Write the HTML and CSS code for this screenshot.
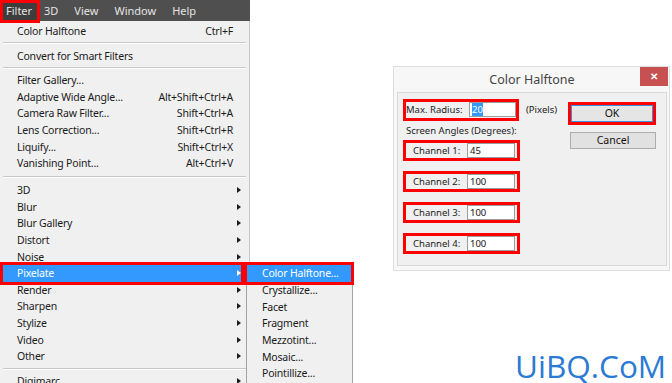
FILE: index.html
```html
<!DOCTYPE html>
<html>
<head>
    <meta charset="UTF-8">
    <title>Color Halftone</title>
    <link rel="stylesheet" href="styles.css">
</head>
<body>
    <div class="screen">
        <div class="ps">
            <div class="menubar">
                <span class="mb-item mb-active">Filter</span>
                <span class="mb-item mb-first">3D</span>
                <span class="mb-item">View</span>
                <span class="mb-item">Window</span>
                <span class="mb-item">Help</span>
            </div>
            <div class="menu">
                <div class="row"><span>Color Halftone</span><span class="key">Ctrl+F</span></div>
                <div class="sep"></div>
                <div class="row"><span>Convert for Smart Filters</span></div>
                <div class="sep"></div>
                <div class="row"><span>Filter Gallery...</span></div>
                <div class="row"><span>Adaptive Wide Angle...</span><span class="key">Alt+Shift+Ctrl+A</span></div>
                <div class="row"><span>Camera Raw Filter...</span><span class="key">Shift+Ctrl+A</span></div>
                <div class="row"><span>Lens Correction...</span><span class="key">Shift+Ctrl+R</span></div>
                <div class="row"><span>Liquify...</span><span class="key">Shift+Ctrl+X</span></div>
                <div class="row"><span>Vanishing Point...</span><span class="key">Alt+Ctrl+V</span></div>
                <div class="sep sep-wide"></div>
                <div class="row sub"><span>3D</span><i class="arrow"></i></div>
                <div class="row sub"><span>Blur</span><i class="arrow"></i></div>
                <div class="row sub"><span>Blur Gallery</span><i class="arrow"></i></div>
                <div class="row sub"><span>Distort</span><i class="arrow"></i></div>
                <div class="row sub"><span>Noise</span><i class="arrow"></i></div>
                <div class="row sub sel"><span>Pixelate</span><i class="arrow"></i></div>
                <div class="row sub"><span>Render</span><i class="arrow"></i></div>
                <div class="row sub"><span>Sharpen</span><i class="arrow"></i></div>
                <div class="row sub"><span>Stylize</span><i class="arrow"></i></div>
                <div class="row sub"><span>Video</span><i class="arrow"></i></div>
                <div class="row sub"><span>Other</span><i class="arrow"></i></div>
                <div class="sep"></div>
                <div class="row sub"><span>Digimarc</span><i class="arrow"></i></div>
            </div>
            <div class="submenu">
                <div class="row sel"><span>Color Halftone...</span></div>
                <div class="row"><span>Crystallize...</span></div>
                <div class="row"><span>Facet</span></div>
                <div class="row"><span>Fragment</span></div>
                <div class="row"><span>Mezzotint...</span></div>
                <div class="row"><span>Mosaic...</span></div>
                <div class="row"><span>Pointillize...</span></div>
            </div>
        </div>

        <div class="dialog">
            <div class="titlebar">
                <span></span>
                <span class="title">Color Halftone</span>
                <span class="close">&#x2715;</span>
            </div>
            <div class="panel">
                <div class="fields">
                    <div class="radius-row">
                        <div class="field radius">
                            <span class="label">Max. Radius:</span>
                            <span class="input"><span class="picked">20</span></span>
                        </div>
                        <span class="pixels">(Pixels)</span>
                    </div>
                    <div class="caption">Screen Angles (Degrees):</div>
                    <div class="field ch">
                        <span class="label">Channel 1:</span>
                        <span class="input">45</span>
                    </div>
                    <div class="field ch">
                        <span class="label">Channel 2:</span>
                        <span class="input">100</span>
                    </div>
                    <div class="field ch">
                        <span class="label">Channel 3:</span>
                        <span class="input">100</span>
                    </div>
                    <div class="field ch">
                        <span class="label">Channel 4:</span>
                        <span class="input">100</span>
                    </div>
                </div>
                <div class="buttons">
                    <div class="ok-box"><div class="btn ok">OK</div></div>
                    <div class="btn cancel">Cancel</div>
                </div>
            </div>
        </div>
    </div>
    <div class="watermark">UiBQ.CoM</div>
</body>
</html>
```

FILE: styles.css
```css
:root {
    --menu-bg: #f0f0f0;
    --bar-bg: #4f4f4f;
    --hl: #3399ff;
    --mark: #ff0000;
    --text: #1b1b1b;
}
html,
body {
    margin: 0;
}
body {
    position: relative;
    width: 672px;
    height: 383px;
    overflow: hidden;
    background: #fff;
    font-family: "Noto Sans", "Liberation Sans", sans-serif;
    color: var(--text);
}
.screen {
    display: flex;
    align-items: flex-start;
}

/* photoshop filter menu */
.ps {
    position: relative;
    flex: none;
    width: 250px;
}
.menubar {
    display: flex;
    align-items: flex-start;
    height: 21px;
    background: var(--bar-bg);
    color: #e4e4e4;
    font-size: 11px;
}
.mb-item {
    padding: 0 8px;
    line-height: 21px;
}
.mb-active {
    box-sizing: border-box;
    width: 40px;
    height: 23px;
    padding: 0 0 0 3px;
    border: 3px solid var(--mark);
    background: #3d3d3d;
    line-height: 16px;
}
.mb-first {
    padding-left: 4px;
}
.menu {
    width: 249px;
    padding-top: 2px;
    border-right: 1px solid #c9c9c9;
    background: var(--menu-bg);
    font-size: 10.5px;
    letter-spacing: -0.2px;
}
.row {
    display: flex;
    align-items: center;
    height: 16.67px;
    margin: 0 8px 0 3px;
    padding: 0 8px 0 14px;
    white-space: nowrap;
}
.key {
    margin-left: auto;
}
.sub {
    padding-right: 0;
}
.arrow {
    margin-left: auto;
    width: 0;
    height: 0;
    border-left: 4px solid var(--text);
    border-top: 3.5px solid transparent;
    border-bottom: 3.5px solid transparent;
}
.sel {
    background: var(--hl);
    color: #fff;
    outline: 3px solid var(--mark);
}
.sel .arrow {
    border-left-color: #fff;
}
.sep {
    height: 0;
    margin: 2.83px 3px;
    border-top: 1px solid #c8c8c8;
    border-bottom: 1px solid #fff;
}
.sep-wide {
    margin: 4px 3px;
}
.submenu {
    position: absolute;
    top: 262px;
    left: 246px;
    width: 105px;
    padding: 2px 0;
    border: 1px solid #a3a3a3;
    background: var(--menu-bg);
    font-size: 10.5px;
    letter-spacing: -0.2px;
}
.submenu .row {
    margin: 0 1px 0 0;
    padding: 0 0 0 15px;
}

/* dialog */
.dialog {
    flex: none;
    box-sizing: border-box;
    width: 277px;
    margin: 66px 0 0 143px;
    padding: 0 2px 4px 3px;
    border: 1px solid #dedede;
    background: #f7f7f7;
}
.titlebar {
    display: grid;
    grid-template-columns: 1fr auto 1fr;
    align-items: start;
    height: 25px;
}
.title {
    padding-top: 3px;
    line-height: 20px;
    font-size: 12.5px;
    color: #444;
}
.close {
    justify-self: end;
    width: 28px;
    height: 19px;
    margin-right: -1px;
    background: #c75050;
    color: #fff;
    font-size: 10px;
    font-weight: bold;
    line-height: 19px;
    text-align: center;
}
.panel {
    display: flex;
    align-items: flex-start;
    box-sizing: border-box;
    height: 174px;
    padding: 6px 10px 0 5px;
    border: 1px solid #d9d9d9;
    background: #f0f0f0;
    font-size: 9.5px;
    color: #222;
}
.radius-row {
    display: flex;
    align-items: center;
}
.field {
    display: flex;
    align-items: center;
    box-sizing: border-box;
    height: 21.5px;
    border: 3px solid var(--mark);
}
.radius {
    width: 116px;
}
.radius .label {
    width: 63px;
}
.pixels {
    margin-left: 7px;
}
.caption {
    margin: 2.5px 0 0.5px 3px;
    line-height: 16px;
}
.ch {
    width: 117px;
    margin-bottom: 9.5px;
    padding: 0 2px 0 7px;
}
.ch .label {
    width: 54px;
}
.input {
    box-sizing: border-box;
    width: 48px;
    height: 15px;
    padding-left: 2px;
    border: 1px solid #9c9c9c;
    background: #fff;
    line-height: 13px;
    color: #111;
}
.radius .input {
    width: 47px;
}
.picked {
    background: var(--hl);
    color: #fff;
}
.buttons {
    display: flex;
    flex-direction: column;
    align-items: flex-end;
    margin: 2.7px 0 0 auto;
}
.ok-box {
    box-sizing: border-box;
    width: 88px;
    height: 23px;
    border: 3px solid var(--mark);
}
.btn {
    display: flex;
    align-items: center;
    justify-content: center;
    box-sizing: border-box;
    font-size: 10.5px;
    color: #111;
}
.ok {
    height: 100%;
    border: 1px solid #3d8ee0;
    background: #e5e5e5;
}
.cancel {
    width: 86px;
    height: 17.3px;
    margin-top: 7px;
    border: 1px solid #adadad;
    background: #e1e1e1;
}

.watermark {
    position: absolute;
    top: 350px;
    left: 515px;
    font-family: "Open Sans", "Noto Sans", sans-serif;
    font-size: 31.5px;
    line-height: 1;
    color: #2b7ad3;
    white-space: nowrap;
}
```
